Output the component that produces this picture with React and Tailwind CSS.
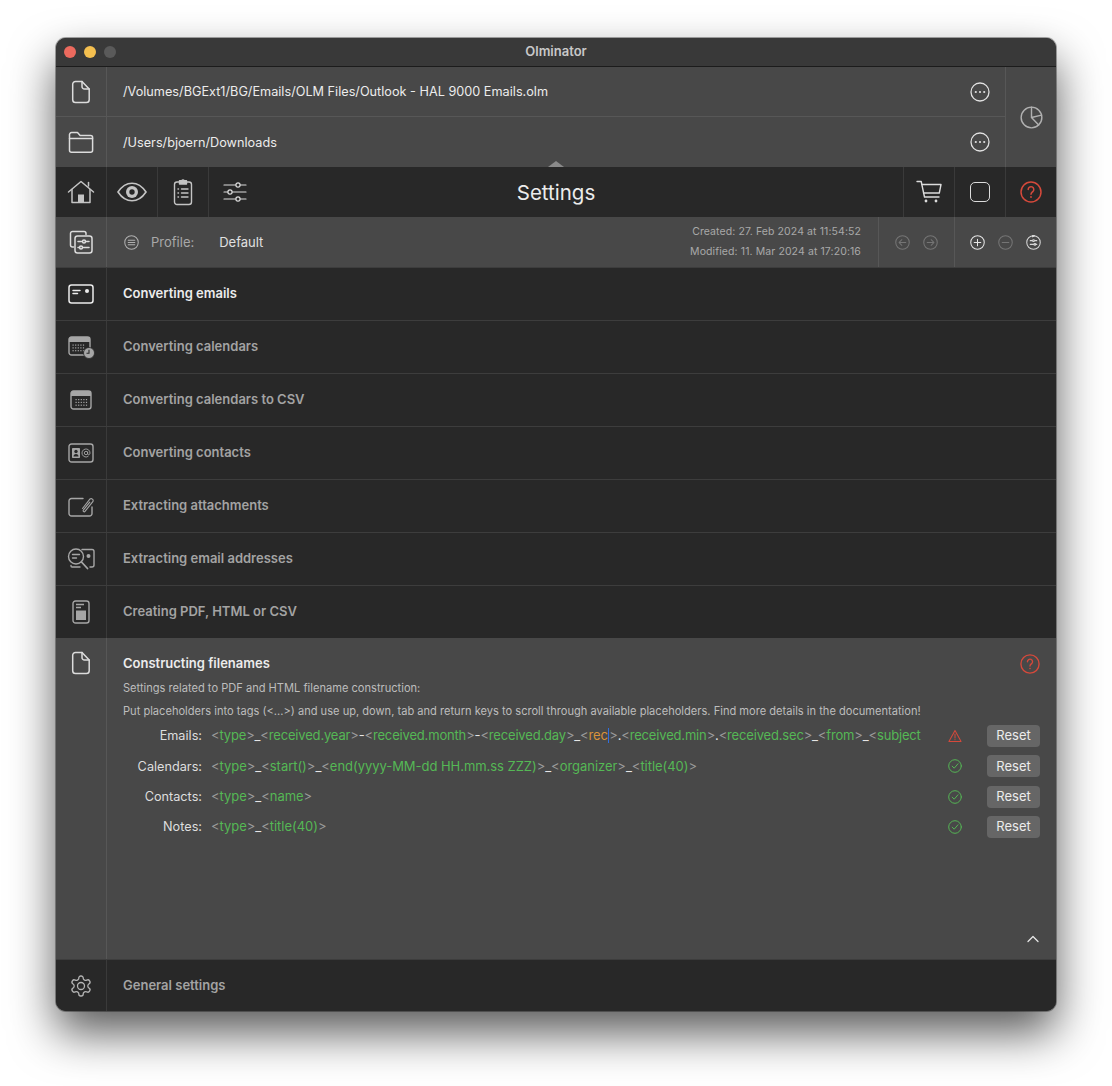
import React from 'react';

const Svg = ({ size = 24, h, vb = '0 0 24 24', color = 'text-[#dcdcdc]', sw = 1.5, children }) => (
    <svg width={size} height={h || size} viewBox={vb} fill="none" stroke="currentColor" strokeWidth={sw} strokeLinecap="round" strokeLinejoin="round" className={color}>
        {children}
    </svg>
);

const FileIcon = () => (
    <Svg size={20} h={24} vb="0 0 20 24">
        <path d="M4.500 1.500h6.500l7.200 7.600v10.600a2.800 2.800 0 0 1-2.800 2.800H4.500a2.800 2.800 0 0 1-2.800-2.800V4.300a2.800 2.800 0 0 1 2.800-2.800z" />
        <path d="M11 1.500v5a2.500 2.500 0 0 0 2.500 2.600h4.700" />
    </Svg>
);

const FolderIcon = () => (
    <Svg size={26} h={22} vb="0 0 26 22">
        <path d="M1.500 5V3.600a2 2 0 0 1 2-2h6l2.600 3h10.500a2 2 0 0 1 2 2v12.600a2 2 0 0 1-2 2H3.500a2 2 0 0 1-2-2z" />
        <path d="M1.500 7.500h23" />
    </Svg>
);

const HomeIcon = () => (
    <svg width="28" height="24" viewBox="0 0 28 24" fill="none" stroke="currentColor" strokeWidth="1.500" strokeLinecap="round" strokeLinejoin="round" className="text-[#c4c4c4]">
        <path d="M1.500 12 14 1.500 26.500 12" />
        <path d="M5 9.500V22.500H23V9.500" />
        <path d="M21.500 6V2.500" />
        <rect x="11" y="14.500" width="6" height="8" fill="currentColor" stroke="none" />
    </svg>
);

const EyeIcon = () => (
    <svg width="30" height="20" viewBox="0 0 30 20" fill="none" stroke="currentColor" strokeWidth="1.600" className="text-[#c4c4c4]">
        <path d="M1 10C5 4 9.500 1.200 15 1.200S25 4 29 10c-4 6-8.500 8.800-14 8.800S5 16 1 10z" />
        <circle cx="15" cy="10" r="6" fill="currentColor" stroke="none" />
        <circle cx="15" cy="10" r="2.700" fill="#282828" stroke="none" />
    </svg>
);

const ClipboardIcon = () => (
    <Svg size={20} h={28} vb="0 0 20 28" color="text-[#c4c4c4]" sw={1.4}>
        <rect x="1.500" y="4" width="17" height="22.500" rx="2.500" />
        <path d="M6.500 4V2.800h2.300a1.300 1.300 0 0 1 2.400 0h2.300V6h-7z" fill="currentColor" />
        <path d="M8.500 11h6.500M8.500 15h6.500M8.500 19h6.500" />
        <path d="M5 11h.5M5 15h.5M5 19h.5" />
    </Svg>
);

const Slider = ({ y, x }) => (
    <>
        <path d={`M1 ${y}H${x - 2.300}M${x + 2.300} ${y}H23`} />
        <circle cx={x} cy={y} r="2.100" />
    </>
);

const SlidersIcon = () => (
    <Svg size={24} h={22} vb="0 0 24 22" sw={1.2}>
        <Slider y={4} x={15} />
        <Slider y={11} x={7} />
        <Slider y={18} x={15} />
    </Svg>
);

const ProfilesIcon = () => (
    <Svg size={24} h={24} vb="0 0 24 24" sw={1.5}>
        <path d="M4.500 17H3.500a2 2 0 0 1-2-2V3.500a2 2 0 0 1 2-2H15a2 2 0 0 1 2 2v1" />
        <rect x="6" y="6" width="17" height="17" rx="2.500" />
        <path d="M9 11.500h4M16.500 11.500H20M9 17.500h1.500M14 17.500h6" />
        <circle cx="15" cy="11.500" r="1.500" />
        <circle cx="12" cy="17.500" r="1.500" />
    </Svg>
);

const PieIcon = () => (
    <Svg size={23} vb="0 0 24 24" color="text-[#b0b0b0]" sw={1.5}>
        <circle cx="12" cy="12" r="10.800" />
        <path d="M12 1.200V12l7.500 7.800M12 12l10.500-2.500" />
    </Svg>
);

const MoreIcon = () => (
    <svg width="20" height="20" viewBox="0 0 20 20" className="text-[#e0e0e0]" fill="none" stroke="currentColor" strokeWidth="1.300">
        <circle cx="10" cy="10" r="9" />
        <circle cx="5.800" cy="10" r="1.100" fill="currentColor" stroke="none" />
        <circle cx="10" cy="10" r="1.100" fill="currentColor" stroke="none" />
        <circle cx="14.200" cy="10" r="1.100" fill="currentColor" stroke="none" />
    </svg>
);

const CartIcon = () => (
    <Svg size={26} h={24} vb="0 0 26 24" sw={1.4}>
        <path d="M1 1.500h4.200l3.300 15.500h14.500" />
        <path d="M5.800 4.500H25l-1.700 8.500H7.500" />
        <circle cx="10" cy="21" r="1.400" fill="currentColor" stroke="none" />
        <circle cx="20" cy="21" r="1.400" fill="currentColor" stroke="none" />
    </Svg>
);

const HelpIcon = ({ size = 22 }) => (
    <svg width={size} height={size} viewBox="0 0 22 22" fill="none" className="text-[#d5493b]" stroke="currentColor" strokeWidth="1.500" strokeLinecap="round">
        <circle cx="11" cy="11" r="10" />
        <path d="M8.200 8.500a2.800 2.800 0 1 1 4.600 2.100c-1.100.9-1.800 1.300-1.800 2.600" />
        <circle cx="11" cy="16" r=".9" fill="currentColor" stroke="none" />
    </svg>
);

const CircleIcon = ({ color, children, size = 15 }) => (
    <svg width={size} height={size} viewBox="0 0 16 16" fill="none" stroke="currentColor" strokeWidth="1.100" strokeLinecap="round" strokeLinejoin="round" className={color}>
        <circle cx="8" cy="8" r="7.200" />
        {children}
    </svg>
);

const CardIcon = () => (
    <Svg size={26} h={20} vb="0 0 26 20" color="text-[#ececec]" sw={1.5}>
        <rect x="1" y="1" width="24" height="18" rx="2.500" />
        <path d="M5 6.500h7M5 9.500h4.500" />
        <circle cx="19" cy="7" r="2" fill="currentColor" stroke="none" />
    </Svg>
);

const CalGrid = ({ x = 6, y = 11 }) => (
    <g fill="currentColor" stroke="none">
        {[0, 1, 2].map((r) =>
            [0, 1, 2, 3, 4].map((c) => <rect key={`${r}-${c}`} x={x + c * 2.600} y={y + r * 2.800} width="1.200" height="1.200" />)
        )}
    </g>
);

const CalClockIcon = () => (
    <svg width="27" height="23" viewBox="0 0 27 23" fill="none" stroke="currentColor" strokeWidth="1.400" className="text-[#a6a6a6]">
        <rect x="1" y="1" width="21" height="18" rx="2.500" />
        <path d="M1 3.500a2.500 2.500 0 0 1 2.500-2.500h16a2.500 2.500 0 0 1 2.500 2.500V6H1z" fill="currentColor" stroke="none" />
        <CalGrid x={4.500} y={8.500} />
        <circle cx="21" cy="17" r="5.500" fill="currentColor" stroke="#282828" strokeWidth=".8" />
        <path d="M21 13.800V17.300H18.500" stroke="#282828" strokeWidth="1.100" />
    </svg>
);

const CalIcon = () => (
    <svg width="22" height="20" viewBox="0 0 22 20" fill="none" stroke="currentColor" strokeWidth="1.400" className="text-[#a6a6a6]">
        <rect x="1" y="1" width="20" height="18" rx="2.500" />
        <path d="M1 3.500a2.500 2.500 0 0 1 2.500-2.500h15a2.500 2.500 0 0 1 2.500 2.500V6H1z" fill="currentColor" stroke="none" />
        <CalGrid x={5.500} y={9} />
    </svg>
);

const ContactIcon = () => (
    <svg width="26" height="20" viewBox="0 0 26 20" fill="none" stroke="currentColor" strokeWidth="1.400" className="text-[#a6a6a6]">
        <rect x="1" y="1" width="24" height="18" rx="2.500" />
        <rect x="4" y="5" width="8" height="10" rx=".8" fill="currentColor" stroke="none" />
        <circle cx="8" cy="8.500" r="1.700" fill="#282828" stroke="none" />
        <path d="M5.500 13.500a2.500 2.500 0 0 1 5 0z" fill="#282828" stroke="none" />
        <circle cx="18" cy="10" r="1.700" strokeWidth=".9" />
        <path d="M19.700 8.500v2.300c0 1.500 2.300 1.300 2.300-.8a4 4 0 1 0-1.600 3.200" strokeWidth=".9" />
    </svg>
);

const AttachIcon = () => (
    <svg width="26" height="22" viewBox="0 0 26 22" fill="none" stroke="currentColor" strokeWidth="1.400" strokeLinecap="round" className="text-[#a6a6a6]">
        <path d="M15 3.500H3.500a2.500 2.500 0 0 0-2.500 2.500v12.500a2.500 2.500 0 0 0 2.500 2.500h18a2.500 2.500 0 0 0 2.500-2.500V12" />
        <path d="M14.500 13.500l7.500-9.500a2 2 0 0 1 3 2.400l-8 10a1 1 0 0 1-1.700-1.200l6.500-8" strokeWidth="1.100" />
    </svg>
);

const SearchCardIcon = () => (
    <svg width="28" height="22" viewBox="0 0 28 22" fill="none" stroke="currentColor" strokeWidth="1.400" strokeLinecap="round" className="text-[#a6a6a6]">
        <path d="M15 1.500h10a2 2 0 0 1 2 2v13.500a2 2 0 0 1-2 2h-2M4 17.500v.5a1 1 0 0 0 1 1h8" />
        <circle cx="9" cy="8.500" r="7.500" />
        <path d="M5.500 6.500h7M5.500 10h4" />
        <path d="M14.500 14l6 6.500" strokeWidth="1.800" />
        <circle cx="21.500" cy="8" r="2" fill="currentColor" stroke="none" />
    </svg>
);

const PdfIcon = () => (
    <svg width="18" height="24" viewBox="0 0 18 24" fill="none" stroke="currentColor" strokeWidth="1.400" className="text-[#a6a6a6]">
        <rect x="1" y="1" width="16" height="22" rx="2.500" />
        <path d="M4 4.500h8M4 7.500h5" />
        <rect x="4" y="10.500" width="10" height="9.500" fill="currentColor" stroke="none" />
    </svg>
);

const GearIcon = () => (
    <svg width="24" height="24" viewBox="0 0 24 24" fill="none" stroke="currentColor" strokeWidth="1.300" strokeLinejoin="round" className="text-[#b4b4b4]">
        <path d="M12.220 2h-.44a2 2 0 0 0-2 2v.18a2 2 0 0 1-1 1.730l-.43.250a2 2 0 0 1-2 0l-.150-.080a2 2 0 0 0-2.730.730l-.220.380a2 2 0 0 0 .730 2.730l.150.100a2 2 0 0 1 1 1.720v.510a2 2 0 0 1-1 1.740l-.150.090a2 2 0 0 0-.730 2.730l.220.380a2 2 0 0 0 2.730.730l.150-.080a2 2 0 0 1 2 0l.430.250a2 2 0 0 1 1 1.730V20a2 2 0 0 0 2 2h.44a2 2 0 0 0 2-2v-.18a2 2 0 0 1 1-1.730l.430-.250a2 2 0 0 1 2 0l.150.080a2 2 0 0 0 2.730-.730l.220-.390a2 2 0 0 0-.730-2.730l-.150-.080a2 2 0 0 1-1-1.740v-.500a2 2 0 0 1 1-1.740l.150-.090a2 2 0 0 0 .730-2.730l-.220-.380a2 2 0 0 0-2.730-.730l-.150.080a2 2 0 0 1-2 0l-.430-.250a2 2 0 0 1-1-1.730V4a2 2 0 0 0-2-2z" />
        <circle cx="12" cy="12" r="3.500" />
    </svg>
);

const IconCell = ({ children, border = 'border-[#575757]', w = 'w-[51px]' }) => (
    <div className={`${w} shrink-0 h-full flex items-center justify-center border-r ${border}`}>{children}</div>
);

const PathRow = ({ icon, text, last }) => (
    <div className={`h-[50px] flex items-center ${last ? '' : 'border-b border-[#575757]'}`}>
        <IconCell>{icon}</IconCell>
        <div className={`flex-1 pl-[16px] text-[12.7px] text-[#ececec] ${last ? 'pt-[2px]' : ''}`}>{text}</div>
        <div className="pr-[15px] flex"><MoreIcon /></div>
    </div>
);

const SectionRow = ({ icon, title, active }) => (
    <div className="h-[53px] flex items-center bg-[#282828] border-t border-[#3d3d3d]">
        <IconCell border="border-[#3a3a3a]">{icon}</IconCell>
        <div className={`pl-[16px] text-[13px] font-semibold ${active ? 'text-[#ececec]' : 'text-[#a3a3a3]'}`}>{title}</div>
    </div>
);

const G = ({ children }) => <span className="text-[#55b855]">{children}</span>;
const A = ({ children }) => <span className="text-[#9a9a9a]">{children}</span>;
const S = ({ children }) => <span className="text-[#e6e6e6]">{children}</span>;

// <name> with gray brackets and green name
const Tag = ({ n }) => (
    <>
        <A>&lt;</A>
        <G>{n}</G>
        <A>&gt;</A>
    </>
);

const CheckIcon = () => (
    <CircleIcon color="text-[#55b855]" size={14}>
        <path d="M4.800 8.200l2.300 2.300 4.300-5" />
    </CircleIcon>
);

const WarnIcon = () => (
    <svg width="15" height="14" viewBox="0 0 15 14" fill="none" stroke="currentColor" strokeWidth="1.100" strokeLinejoin="round" strokeLinecap="round" className="text-[#d5493b]">
        <path d="M7.500 1 14 12.800H1z" />
        <path d="M7.500 5v4.200M7.500 10.800v.2" />
    </svg>
);

const FileRow = ({ label, status, tight, children }) => (
    <div className="h-[22px] flex items-center">
        <div className="w-[79px] text-right text-[12.7px] text-[#dedede] shrink-0">{label}</div>
        <div className={`w-[713px] ml-[9px] shrink-0 whitespace-nowrap overflow-hidden text-[13px] ${tight ? 'tracking-[-0.17px]' : 'tracking-[-0.04px]'}`}>{children}</div>
        <div className="w-[14px] ml-[24px] shrink-0 flex justify-center">{status}</div>
        <button className="ml-[25px] w-[53px] h-[22px] rounded-[4px] bg-[#666666] text-[13px] text-[#ececec]">Reset</button>
    </div>
);

const App = () => {
    return (
        <div className="w-[1112px] h-[1086px] bg-white pt-[38px] pl-[56px] font-['Inter','Liberation_Sans',sans-serif]">
            <div className="w-[1000px] h-[973px] rounded-[10px] overflow-hidden flex flex-col shadow-[0_22px_46px_rgba(0,0,0,0.65),0_0_0_1px_rgba(90,90,90,0.5)] bg-[#282828]">
                <div className="h-[29px] shrink-0 relative flex items-center justify-center bg-[#393939] border-b border-[#1c1c1c]">
                    <div className="absolute left-[8px] top-[8px] flex gap-[8px]">
                        <div className="w-[12px] h-[12px] rounded-full bg-[#ec6a5e]" />
                        <div className="w-[12px] h-[12px] rounded-full bg-[#f4bf4f]" />
                        <div className="w-[12px] h-[12px] rounded-full bg-[#5a5a5a]" />
                    </div>
                    <span className="text-[13px] font-semibold text-[#c8c8c8]">Olminator</span>
                </div>

                <div className="h-[100px] shrink-0 flex bg-[#484848] relative">
                    <div className="flex-1">
                        <PathRow icon={<FileIcon />} text="/Volumes/BGExt1/BG/Emails/OLM Files/Outlook - HAL 9000 Emails.olm" />
                        <PathRow icon={<FolderIcon />} text="/Users/bjoern/Downloads" last />
                    </div>
                    <div className="w-[51px] border-l border-[#575757] flex items-center justify-center">
                        <PieIcon />
                    </div>
                    <div className="absolute left-[492px] bottom-0 w-0 h-0 border-x-[8px] border-x-transparent border-b-[6px] border-b-[#8a8a8a]" />
                </div>

                <div className="h-[50px] shrink-0 flex items-center bg-[#282828]">
                    <IconCell border="border-[#3a3a3a]"><HomeIcon /></IconCell>
                    <IconCell border="border-[#3a3a3a]"><EyeIcon /></IconCell>
                    <IconCell border="border-[#3a3a3a]"><ClipboardIcon /></IconCell>
                    <div className="w-[51px] h-full flex items-center justify-center"><SlidersIcon /></div>
                    <div className="flex-1 pr-[51px] pt-[2px] text-center text-[20.5px] text-[#ececec]">Settings</div>
                    <div className="w-[51px] h-full flex items-center justify-center border-l border-[#3a3a3a]"><CartIcon /></div>
                    <div className="w-[51px] h-full flex items-center justify-center border-l border-[#3a3a3a]">
                        <div className="w-[20px] h-[20px] rounded-[5px] border-[1.5px] border-[#dcdcdc]" />
                    </div>
                    <div className="w-[51px] h-full flex items-center justify-center border-l border-[#3a3a3a]"><HelpIcon /></div>
                </div>

                <div className="h-[50px] shrink-0 flex items-center bg-[#484848]">
                    <IconCell><ProfilesIcon /></IconCell>
                    <div className="pl-[17px] flex items-center">
                        <CircleIcon color="text-[#b0b0b0]">
                            <path d="M4.500 5.500h7M4.500 8h7M4.500 10.500h7" />
                        </CircleIcon>
                        <span className="ml-[12px] pt-[2px] text-[13px] text-[#a8a8a8]">Profile:</span>
                        <span className="ml-[25px] pt-[2px] text-[13px] text-[#e0e0e0]">Default</span>
                    </div>
                    <div className="flex-1 pr-[17px] text-right text-[10.5px] leading-[20px] tracking-[0.1px] text-[#a8a8a8]">
                        <div>Created: 27. Feb 2024 at 11:54:52</div>
                        <div>Modified: 11. Mar 2024 at 17:20:16</div>
                    </div>
                    <div className="w-[76px] h-full flex items-center justify-center gap-[13px] border-l border-[#575757]">
                        <CircleIcon color="text-[#757575]"><path d="M11.500 8h-7M7.300 5 4.300 8l3 3" /></CircleIcon>
                        <CircleIcon color="text-[#757575]"><path d="M4.500 8h7M8.700 5l3 3-3 3" /></CircleIcon>
                    </div>
                    <div className="w-[102px] h-full flex items-center justify-center gap-[13px] border-l border-[#575757]">
                        <CircleIcon color="text-[#e6e6e6]"><path d="M8 4.500v7M4.500 8h7" /></CircleIcon>
                        <CircleIcon color="text-[#757575]"><path d="M4.500 8h7" /></CircleIcon>
                        <CircleIcon color="text-[#d8d8d8]">
                            <path d="M4.500 6h2M9.500 6h2M4.500 10h4M10.500 10h1" />
                            <circle cx="8" cy="6" r="1" />
                            <circle cx="9.500" cy="10" r="1" />
                            <path d="M7 .2 9.200.8 7 2z" fill="currentColor" />
                        </CircleIcon>
                    </div>
                </div>

                <SectionRow icon={<CardIcon />} title="Converting emails" active />
                <SectionRow icon={<CalClockIcon />} title="Converting calendars" />
                <SectionRow icon={<CalIcon />} title="Converting calendars to CSV" />
                <SectionRow icon={<ContactIcon />} title="Converting contacts" />
                <SectionRow icon={<AttachIcon />} title="Extracting attachments" />
                <SectionRow icon={<SearchCardIcon />} title="Extracting email addresses" />
                <SectionRow icon={<PdfIcon />} title="Creating PDF, HTML or CSV" />

                <div className="h-[322px] shrink-0 flex bg-[#484848] border-b border-[#3d3d3d]">
                    <div className="w-[51px] shrink-0 border-r border-[#575757] flex justify-center pt-[13px]">
                        <FileIcon />
                    </div>
                    <div className="flex-1 pl-[16px] pr-[16px] relative">
                        <div className="pt-[16px] text-[13px] leading-[18px] font-semibold text-[#ececec]">Constructing filenames</div>
                        <div className="mt-[8px] text-[11.1px] leading-[16px] text-[#bdbdbd]">Settings related to PDF and HTML filename construction:</div>
                        <div className="mt-[7px] text-[11.1px] leading-[16px] text-[#bdbdbd]">Put placeholders into tags (&lt;...&gt;) and use up, down, tab and return keys to scroll through available placeholders. Find more details in the documentation!</div>
                        <div className="absolute right-[16px] top-[16px] flex"><HelpIcon size={20} /></div>
                        <div className="mt-[6px] flex flex-col gap-[8.300px]">
                            <FileRow label="Emails:" status={<WarnIcon />} tight>
                                <Tag n="type" /><S>_</S><Tag n="received.year" /><S>-</S><Tag n="received.month" /><S>-</S><Tag n="received.day" /><S>_</S><A>&lt;</A>
                                <span className="text-[#d9923a]">rec</span>
                                <span className="inline-block w-[1.500px] h-[15px] bg-[#2f6fe0] align-[-3px]" />
                                <A>&gt;</A><S>.</S><Tag n="received.min" /><S>.</S><Tag n="received.sec" /><S>_</S><Tag n="from" /><S>_</S><A>&lt;</A><G>subject</G>
                            </FileRow>
                            <FileRow label="Calendars:" status={<CheckIcon />}>
                                <Tag n="type" /><S>_</S><Tag n="start()" /><S>_</S><Tag n="end(yyyy-MM-dd HH.mm.ss ZZZ)" /><S>_</S><Tag n="organizer" /><S>_</S><Tag n="title(40)" />
                            </FileRow>
                            <FileRow label="Contacts:" status={<CheckIcon />}>
                                <Tag n="type" /><S>_</S><Tag n="name" />
                            </FileRow>
                            <FileRow label="Notes:" status={<CheckIcon />}>
                                <Tag n="type" /><S>_</S><Tag n="title(40)" />
                            </FileRow>
                        </div>
                        <svg width="12" height="8" viewBox="0 0 12 8" fill="none" stroke="currentColor" strokeWidth="1.300" strokeLinecap="round" strokeLinejoin="round" className="absolute right-[17px] bottom-[16px] text-[#e6e6e6]">
                            <path d="M1 6.500 6 1.500l5 5" />
                        </svg>
                    </div>
                </div>

                <div className="flex-1 flex items-center bg-[#282828]">
                    <IconCell border="border-[#3a3a3a]"><GearIcon /></IconCell>
                    <div className="pl-[16px] text-[13px] font-semibold text-[#a3a3a3]">General settings</div>
                </div>
            </div>
        </div>
    );
};

export default App;
